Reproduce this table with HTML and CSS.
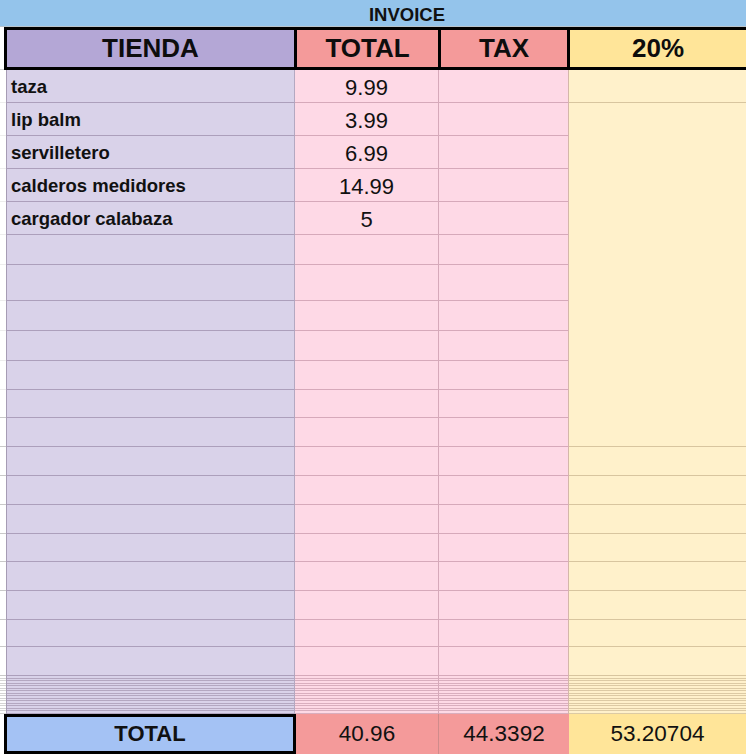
FILE: index.html
```html
<!DOCTYPE html>
<html lang="es">
<head>
<meta charset="utf-8">
<title>Invoice</title>
<link rel="stylesheet" href="styles.css">
</head>
<body>
<div class="title">INVOICE</div>
<div class="head">
  <div class="hg"></div>
  <div class="hc h-tienda">TIENDA</div>
  <div class="hc h-total">TOTAL</div>
  <div class="hc h-tax">TAX</div>
  <div class="hc h-pct">20%</div>
</div>
<div class="sheet">
  <div class="g"></div><div class="p">taza</div><div class="k">9.99</div><div class="t"></div><div class="y"></div>
  <div class="g"></div><div class="p">lip balm</div><div class="k">3.99</div><div class="t"></div><div class="y m"></div>
  <div class="g"></div><div class="p">servilletero</div><div class="k">6.99</div><div class="t"></div>
  <div class="g"></div><div class="p">calderos medidores</div><div class="k">14.99</div><div class="t"></div>
  <div class="g"></div><div class="p">cargador calabaza</div><div class="k">5</div><div class="t"></div>
  <div class="g"></div><div class="p"></div><div class="k"></div><div class="t"></div>
  <div class="g"></div><div class="p"></div><div class="k"></div><div class="t"></div>
  <div class="g"></div><div class="p"></div><div class="k"></div><div class="t"></div>
  <div class="g"></div><div class="p"></div><div class="k"></div><div class="t"></div>
  <div class="g"></div><div class="p"></div><div class="k"></div><div class="t"></div>
  <div class="g g2"></div><div class="p"></div><div class="k"></div><div class="t"></div>
  <div class="g g2"></div><div class="p"></div><div class="k"></div><div class="t"></div>
  <div class="g g2"></div><div class="p"></div><div class="k"></div><div class="t"></div><div class="y"></div>
  <div class="g g2"></div><div class="p"></div><div class="k"></div><div class="t"></div><div class="y"></div>
  <div class="g g2"></div><div class="p"></div><div class="k"></div><div class="t"></div><div class="y"></div>
  <div class="g g2"></div><div class="p"></div><div class="k"></div><div class="t"></div><div class="y"></div>
  <div class="g g2"></div><div class="p"></div><div class="k"></div><div class="t"></div><div class="y"></div>
  <div class="g g2"></div><div class="p"></div><div class="k"></div><div class="t"></div><div class="y"></div>
  <div class="g g2"></div><div class="p"></div><div class="k"></div><div class="t"></div><div class="y"></div>
  <div class="g g2"></div><div class="p"></div><div class="k"></div><div class="t"></div><div class="y"></div>
  <div class="g thin-g"></div><div class="p thin-p"></div><div class="k thin-k"></div><div class="t thin-k"></div><div class="y thin-y"></div>
</div>
<div class="totals">
  <div class="tg"></div>
  <div class="tc t-label">TOTAL</div>
  <div class="tc t-sum">40.96</div>
  <div class="tc t-tax">44.3392</div>
  <div class="tc t-pct">53.20704</div>
</div>
</body>
</html>
```
FILE: styles.css
```css
html, body {
  margin: 0;
  padding: 0;
}
body {
  width: 746px;
  height: 754px;
  overflow: hidden;
  background: #ffffff;
  font-family: "Liberation Sans", Arial, sans-serif;
  color: #111111;
}

.title {
  box-sizing: content-box;
  height: 22px;
  padding-top: 4px;
  padding-left: 68px;
  border-bottom: 1px solid #b9c4cc;
  background: #94c4eb;
  display: flex;
  align-items: center;
  justify-content: center;
  font-weight: bold;
  font-size: 18.5px;
}

.head {
  display: grid;
  grid-template-columns: 4px 293px 144px 129px 1fr;
  height: 43px;
}
.hg {
  border-bottom: 1px solid #d0d0d0;
}
.hc {
  border-top: 3px solid #000;
  border-bottom: 3px solid #000;
  display: flex;
  align-items: center;
  justify-content: center;
  font-weight: bold;
  font-size: 26px;
  color: #0d0d0d;
}
.h-tienda {
  background: #b4a7d6;
  border-left: 3px solid #000;
  border-right: 3px solid #000;
}
.h-total {
  background: #f49a9a;
  border-right: 3px solid #000;
}
.h-tax {
  background: #f49a9a;
  border-right: 3px solid #000;
}
.h-pct {
  background: #ffe599;
}

.sheet {
  display: grid;
  grid-template-columns: 6px 289px 144px 130px 1fr;
  grid-template-rows: 33px 33px 33px 33px 33px 30px 36px 30px 30px 29px 28px 29px 29px 29px 29px 28px 29px 29px 27px 29px 38px;
}
.sheet > div {
  box-sizing: border-box;
}
.g {
  border-bottom: 1px solid #ededed;
}
.g2 {
  border-bottom: 1px solid #c9c9c9;
}
.p {
  background: #d9d2e9;
  border-left: 1px solid #a69cb4;
  border-right: 1px solid #b4a8c1;
  border-bottom: 1px solid #ac9fbb;
  display: flex;
  align-items: center;
  padding-left: 4px;
  padding-top: 2px;
  font-weight: bold;
  font-size: 18.5px;
  color: #111;
}
.k, .t {
  background: #fed9e6;
  border-right: 1px solid #d6a9ba;
  border-bottom: 1px solid #d6a9ba;
  display: flex;
  align-items: center;
  justify-content: center;
  font-size: 22px;
  padding-top: 3px;
  color: #111;
}
.t {
  border-right: 1px solid #d4b7aa;
}
.y {
  background: #fff1cb;
  border-bottom: 1px solid #d8c59f;
}
.m {
  grid-row: span 11;
}

.thin-g {
  border-bottom: none;
  background: repeating-linear-gradient(to bottom, #ffffff 0, #ffffff 1.5px, #d4d4d4 1.5px, #d4d4d4 2.5px);
}
.thin-p {
  border-bottom: none;
  background: repeating-linear-gradient(to bottom, #d9d2e9 0, #d9d2e9 1.5px, #b3a7c0 1.5px, #b3a7c0 2.5px);
}
.thin-k {
  border-bottom: none;
  background: repeating-linear-gradient(to bottom, #fed9e6 0, #fed9e6 1.5px, #d9aebe 1.5px, #d9aebe 2.5px);
}
.thin-y {
  border-bottom: none;
  background: repeating-linear-gradient(to bottom, #fff1cb 0, #fff1cb 1.5px, #dccaa4 1.5px, #dccaa4 2.5px);
}

.totals {
  display: grid;
  grid-template-columns: 4px 292px 143px 130px 1fr;
  height: 40px;
}
.tc {
  display: flex;
  align-items: center;
  justify-content: center;
  font-size: 22.5px;
  color: #111;
  box-sizing: border-box;
}
.t-label {
  background: #a4c2f4;
  border: 3px solid #000;
  font-weight: bold;
  font-size: 22px;
}
.t-sum {
  background: #f49a9a;
  border-right: 1px solid #d08b8b;
}
.t-tax {
  background: #f49a9a;
}
.t-pct {
  background: #ffe599;
}
```
